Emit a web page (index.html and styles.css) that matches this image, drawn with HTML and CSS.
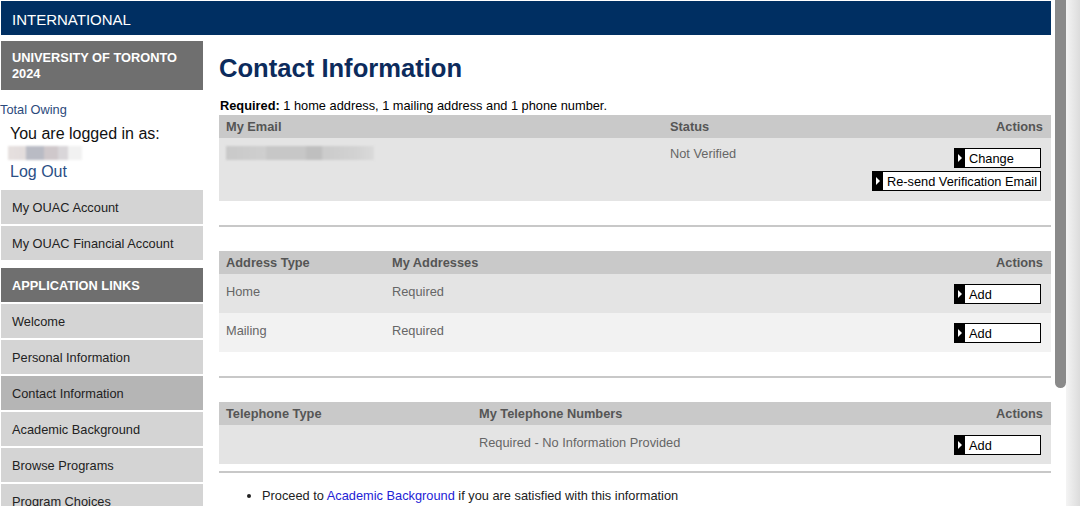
FILE: index.html
```html
<!DOCTYPE html>
<html lang="en">
<head>
    <meta charset="UTF-8">
    <title>Contact Information</title>
    <link rel="stylesheet" href="styles.css">
</head>
<body>
    <div class="page">
        <div class="topbar">INTERNATIONAL</div>
        <div class="layout">
            <div class="sidebar">
                <div class="uni">UNIVERSITY OF TORONTO<br>2024</div>
                <a class="owing" href="#">Total Owing</a>
                <div class="login">
                    <div>You are logged in as:</div>
                    <div class="who"><span class="blur blur-name"></span></div>
                    <a href="#">Log Out</a>
                </div>
                <a class="nav-item" href="#">My OUAC Account</a>
                <a class="nav-item" href="#">My OUAC Financial Account</a>
                <div class="nav-head">APPLICATION LINKS</div>
                <a class="nav-item" href="#">Welcome</a>
                <a class="nav-item" href="#">Personal Information</a>
                <a class="nav-item active" href="#">Contact Information</a>
                <a class="nav-item" href="#">Academic Background</a>
                <a class="nav-item" href="#">Browse Programs</a>
                <a class="nav-item" href="#">Program Choices</a>
            </div>

            <div class="main">
                <h1>Contact Information</h1>
                <p class="required"><b>Required:</b> 1 home address, 1 mailing address and 1 phone number.</p>

                <table class="grid">
                    <tr>
                        <th class="c-email">My Email</th>
                        <th class="c-status">Status</th>
                        <th class="actions">Actions</th>
                    </tr>
                    <tr class="email-row">
                        <td><span class="blur blur-email"></span></td>
                        <td>Not Verified</td>
                        <td class="actions">
                            <a class="btn" href="#">Change</a><br>
                            <a class="btn" href="#">Re-send Verification Email</a>
                        </td>
                    </tr>
                </table>
                <div class="rule"></div>

                <table class="grid">
                    <tr>
                        <th class="c-addr">Address Type</th>
                        <th class="c-addr2">My Addresses</th>
                        <th class="actions">Actions</th>
                    </tr>
                    <tr>
                        <td>Home</td>
                        <td>Required</td>
                        <td class="actions"><a class="btn" href="#">Add</a></td>
                    </tr>
                    <tr class="alt">
                        <td>Mailing</td>
                        <td>Required</td>
                        <td class="actions"><a class="btn" href="#">Add</a></td>
                    </tr>
                </table>
                <div class="rule"></div>

                <table class="grid last">
                    <tr>
                        <th class="c-tel">Telephone Type</th>
                        <th class="c-tel2">My Telephone Numbers</th>
                        <th class="actions">Actions</th>
                    </tr>
                    <tr>
                        <td></td>
                        <td>Required - No Information Provided</td>
                        <td class="actions"><a class="btn" href="#">Add</a></td>
                    </tr>
                </table>
                <div class="rule"></div>

                <ul class="next">
                    <li>Proceed to <a href="#">Academic Background</a> if you are satisfied with this information</li>
                </ul>
            </div>
        </div>
    </div>
    <div class="rail"><div class="thumb"></div></div>
</body>
</html>
```

FILE: styles.css
```css
html, body {
    height: 100%;
}
body {
    margin: 0;
    display: flex;
    overflow: hidden;
    font-family: 'Liberation Sans', Arial, sans-serif;
    background: #fff;
    color: #000;
}
.page {
    width: 1050px;
    margin: 1px 0 0 1px;
    flex-shrink: 0;
}
.topbar {
    height: 34px;
    line-height: 37px;
    padding-left: 11px;
    background-color: #002f62;
    color: #fff;
    font-size: 15px;
}
.layout {
    display: flex;
    gap: 16px;
}
.sidebar {
    width: 202px;
    flex-shrink: 0;
    margin-top: 6px;
    display: flex;
    flex-direction: column;
}
.uni {
    background-color: #6f6f6f;
    color: #fff;
    font-size: 0.8em;
    font-weight: bold;
    line-height: 16px;
    padding: 9px 11px 8px;
}
.owing {
    margin-top: 12px;
    margin-left: -1px;
    font-size: 0.8em;
    line-height: 16px;
    color: #2b4a7c;
    text-decoration: none;
}
.login {
    padding: 6px 0 9px 9px;
    font-size: 16px;
    line-height: 19px;
    color: #111;
}
.login a {
    color: #2b4f86;
    text-decoration: none;
}
.who {
    height: 19px;
}
.blur {
    display: inline-block;
    filter: blur(1px);
}
.blur-name {
    width: 74px;
    height: 14px;
    margin: 3px 0 0 -2px;
    background: linear-gradient(to right, #e6e0df 0, #e2dcdc 18px, #b9bbc4 18px, #b9bbc4 36px, #cfc8cb 36px, #cfc8cb 50px, #d9d6d9 50px, #d9d6d9 60px, #f1f1f1 60px);
}
.blur-email {
    width: 148px;
    height: 14px;
    background: linear-gradient(to right, #c9c9c9 0, #cfcfcf 40px, #c7c7c7 40px, #c7c7c7 80px, #bfbfbf 80px, #bfbfbf 96px, #cbcbcb 96px, #d2d2d2 130px, #dadada 148px);
}
.nav-item {
    display: block;
    height: 34px;
    line-height: 35px;
    margin-bottom: 2px;
    padding-left: 11px;
    background-color: #d4d4d4;
    color: #222;
    font-size: 0.8em;
    text-decoration: none;
}
.nav-item.active {
    background-color: #b5b5b5;
}
.nav-head {
    height: 34px;
    line-height: 35px;
    margin: 6px 0 2px;
    padding-left: 11px;
    background-color: #6f6f6f;
    color: #fff;
    font-size: 0.8em;
    font-weight: bold;
}
.main {
    flex: 1;
    min-width: 0;
}
h1 {
    margin: 18px 0 0;
    font-size: 1.6em;
    line-height: 30px;
    color: #0c2b5c;
}
.required {
    margin: 16px 0 2px 1px;
    font-size: 0.8em;
    line-height: 14px;
}
.grid {
    width: 100%;
    border-collapse: collapse;
    table-layout: fixed;
    font-size: 0.8em;
    margin-bottom: 24px;
}
.grid.last {
    margin-bottom: 7px;
}
.grid th {
    height: 23px;
    padding: 0 7px;
    background-color: #c9c9c9;
    color: #555;
    text-align: left;
    line-height: 23px;
}
.grid th.actions {
    text-align: right;
    padding-right: 8px;
}
.grid td {
    vertical-align: top;
    padding: 10px 7px 0;
    line-height: 16px;
    background-color: #e4e4e4;
    color: #666;
}
.grid tr.alt td {
    background-color: #f2f2f2;
}
.grid td.actions {
    text-align: right;
    padding: 10px 10px 9px 0;
    line-height: 0;
}
.email-row td {
    padding-top: 8px;
}
.email-row td.actions {
    padding: 10px 10px 10px 0;
}
.c-email { width: 430px; }
.c-status { width: 190px; }
.c-addr { width: 152px; }
.c-addr2 { width: 420px; }
.c-tel { width: 239px; }
.c-tel2 { width: 330px; }
.btn {
    position: relative;
    display: inline-block;
    box-sizing: border-box;
    min-width: 87px;
    height: 20px;
    padding: 0 3px 0 4px;
    border: 1px solid #000;
    border-left-width: 11px;
    background-color: #fff;
    color: #000;
    text-align: left;
    text-decoration: none;
    white-space: nowrap;
    line-height: 19px;
}
.btn::before {
    content: "";
    position: absolute;
    left: -7px;
    top: 5px;
    border-left: 4px solid #fff;
    border-top: 4px solid transparent;
    border-bottom: 4px solid transparent;
}
.btn + br + .btn {
    margin-top: 3px;
}
.rule {
    height: 2px;
    background-color: #c8c8c8;
    margin-bottom: 24px;
}
.grid.last + .rule {
    margin-bottom: 0;
}
.next {
    margin: 15px 0 0;
    padding-left: 43px;
    font-size: 0.8em;
    line-height: 16px;
    color: #222;
}
.next a {
    color: #2323d6;
    text-decoration: none;
}
.rail {
    flex: 1;
    padding-left: 4px;
    background: linear-gradient(to right, #fff 0, #fff 15px, #f4f4f4 15px, #dcdcdc 100%);
}
.thumb {
    width: 11px;
    height: 388px;
    background-color: #8a8a8a;
    border-radius: 0 0 6px 6px;
}
```
